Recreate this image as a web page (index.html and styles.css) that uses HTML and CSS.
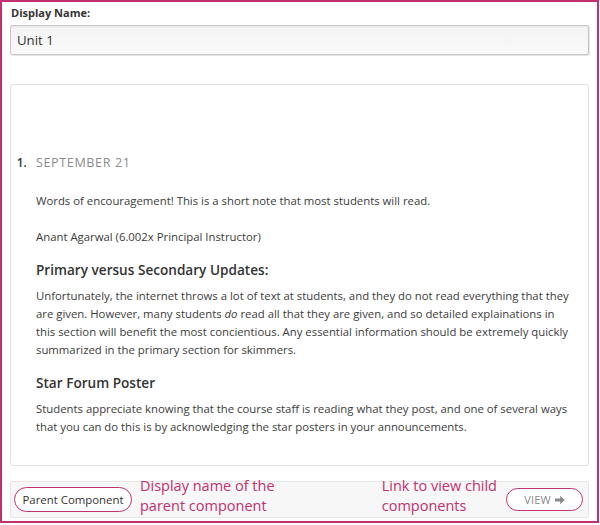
FILE: index.html
```html
<!DOCTYPE html>
<html>
<head>
<meta charset="utf-8">
<link rel="stylesheet" href="styles.css">
</head>
<body>
<div class="frame">
  <div class="field">
    <label class="label">Display Name:</label>
    <div class="input">Unit 1</div>
  </div>
  <div class="content">
    <ol class="updates">
      <li>
        <h2 class="date">SEPTEMBER 21</h2>
        <p>Words of encouragement! This is a short note that most students will read.</p>
        <p>Anant Agarwal (6.002x Principal Instructor)</p>
        <h3>Primary versus Secondary Updates:</h3>
        <p>Unfortunately, the internet throws a lot of text at students, and they do not read everything that they are given. However, many students <em>do</em> read all that they are given, and so detailed explainations in<br>this section will benefit the most concientious. Any essential information should be extremely quickly summarized in the primary section for skimmers.</p>
        <h3>Star Forum Poster</h3>
        <p>Students appreciate knowing that the course staff is reading what they post, and one of several ways that you can do this is by acknowledging the star posters in your announcements.</p>
      </li>
    </ol>
  </div>
  <div class="footer">
    <span class="pill parent">Parent Component</span>
    <span class="note note-left">Display name of the<br>parent component</span>
    <span class="note note-right">Link to view child<br>components</span>
    <span class="pill view">VIEW <svg class="arrow" viewBox="0 0 10 10" width="10" height="10"><path d="M0 3.6h5.2V0.8L9.8 5 5.2 9.2V6.4H0z" fill="#8a8a8a"/></svg></span>
  </div>
</div>
</body>
</html>
```
FILE: styles.css
```css
* { box-sizing: border-box; }
html, body { margin: 0; padding: 0; background: #fff; }
body { font-family: "Open Sans", "Liberation Sans", sans-serif; color: #3c3c3c; }
.frame {
  width: 599px;
  height: 523px;
  border: 2px solid #c2306f;
  padding: 4px 8px 0 8px;
}
.label {
  display: block;
  font-size: 11px;
  font-weight: 700;
  color: #333;
  line-height: 14px;
  margin: 0 0 5px 1px;
}
.input {
  height: 30px;
  border: 1px solid #c8c8c8;
  border-radius: 2px;
  background: linear-gradient(#f3f3f3, #fafafa);
  box-shadow: inset 0 1px 2px rgba(0,0,0,0.06), 1px 1px 0 #e4e4e4;
  font-size: 13.2px;
  line-height: 28px;
  padding-left: 6px;
  color: #333;
}
.content {
  margin-top: 29px;
  height: 382px;
  border: 1px solid #e0e0e6;
  border-radius: 3px;
  padding: 68px 10px 0 0;
}
.updates { margin: 0; padding: 0 0 0 25px; font-size: 11.35px; }
.updates li::marker {
  content: counter(list-item) ".\00a0\00a0\00a0";
  font-size: 11.8px;
  font-weight: 600;
  color: #333;
}
.date {
  margin: 0 0 19px;
  font-size: 12.6px;
  font-weight: 400;
  color: #8c8c8c;
  letter-spacing: 0.6px;
  line-height: 20px;
}
p { margin: 0 0 18px; font-size: 11.35px; line-height: 18px; color: #3c3c3c; }
h3 { margin: -4px 0 7px; font-size: 13.6px; font-weight: 600; color: #333; line-height: 20px; }
.footer {
  margin-top: 15px;
  height: 37px;
  border: 1px solid #e6e6e6;
  border-radius: 2px;
  background: #f7f7f7;
  display: flex;
  align-items: center;
  padding: 0 5px 0 3px;
}
.pill {
  border: 1.5px solid #c2306f;
  border-radius: 13px;
  background: #fff;
  display: inline-flex;
  align-items: center;
  white-space: nowrap;
  flex: none;
}
.parent { color: #333; font-size: 11.4px; height: 25px; width: 118px; justify-content: center; }
.note { color: #c2306f; font-size: 14.5px; line-height: 20px; margin-top: -7px; white-space: nowrap; }
.note-left { margin-left: 8px; }
.note-right { margin-left: auto; }
.view {
  margin-left: 9px;
  width: 77px;
  height: 23px;
  justify-content: center;
  color: #8a8a8a;
  font-size: 11px;
  letter-spacing: 0.2px;
  gap: 4px;
}
.arrow { display: block; }
```
